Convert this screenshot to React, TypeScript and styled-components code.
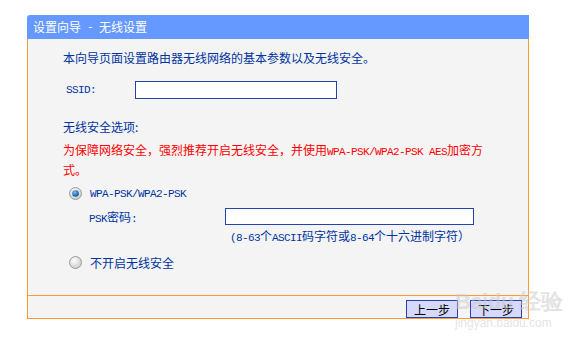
import styled, { createGlobalStyle } from "styled-components";

const GlobalStyle = createGlobalStyle`
  html, body {
    margin: 0;
    padding: 0;
    background: #ffffff;
  }
  body {
    font-family: "Noto Sans CJK SC", "DejaVu Sans", sans-serif;
    font-size: 12px;
  }
`;

const Page = styled.div`
  position: relative;
  width: 568px;
  height: 347px;
  padding: 15px 0 0 27px;
  box-sizing: border-box;
`;

const Panel = styled.div`
  width: 502px;
  display: flex;
  flex-direction: column;
`;

const TitleBar = styled.div`
  height: 24px;
  background: #6699ff;
  color: #ffffff;
  display: flex;
  align-items: center;
  padding-left: 6px;
  border-top-left-radius: 3px;
  font-size: 12px;
  line-height: 12px;
  white-space: pre;
`;

const Body = styled.div`
  background: #f4f4f4;
  border-left: 1px solid #ff9933;
  border-right: 1px solid #ff9933;
  padding: 10px 0 0 35px;
  height: 246px;
  color: #0033a0;
`;

const Line = styled.div<{ $top?: number; $indent?: number; $red?: boolean }>`
  margin-top: ${(p) => p.$top ?? 0}px;
  padding-left: ${(p) => p.$indent ?? 0}px;
  line-height: 17px;
  color: ${(p) => (p.$red ? "#ff0000" : "#0033a0")};
  white-space: nowrap;
`;

const Mono = styled.span`
  font-family: "Liberation Mono", "DejaVu Sans Mono", monospace;
  font-size: 11px;
  letter-spacing: -0.6px;
`;

const FieldRow = styled.div<{ $top: number; $indent: number; $label: number }>`
  margin-top: ${(p) => p.$top}px;
  padding-left: ${(p) => p.$indent}px;
  display: grid;
  grid-template-columns: ${(p) => p.$label}px auto;
  align-items: center;
`;

const TextBox = styled.div<{ $w: number; $h: number }>`
  width: ${(p) => p.$w}px;
  height: ${(p) => p.$h}px;
  box-sizing: border-box;
  background: #ffffff;
  border: 1px solid #2244aa;
`;

const RadioRow = styled.div<{ $top: number }>`
  margin-top: ${(p) => p.$top}px;
  padding-left: 6px;
  display: flex;
  align-items: center;
  gap: 8px;
  height: 17px;
`;

const Footer = styled.div`
  background: #f4f4f4;
  border: 1px solid #ff9933;
  height: 24px;
  display: flex;
  justify-content: flex-end;
  align-items: flex-start;
  gap: 12px;
  padding: 4px 6px 0 0;
  box-sizing: border-box;
`;

const StepButton = styled.div`
  width: 52px;
  height: 18px;
  box-sizing: border-box;
  background: #d6d9fa;
  border: 1px solid #2a3fb0;
  color: #000000;
  display: flex;
  align-items: center;
  justify-content: center;
  font-size: 12px;
`;

const Watermark = styled.div`
  position: absolute;
  left: 455px;
  top: 290px;
  color: rgba(200, 200, 200, 0.5);
  font-family: "Liberation Sans", sans-serif;
  white-space: nowrap;
  pointer-events: none;
`;

const MarkLogo = styled.div`
  font-size: 22px;
  font-weight: bold;
  line-height: 24px;
  letter-spacing: -0.5px;
`;

const MarkUrl = styled.div`
  font-size: 12px;
  line-height: 14px;
  margin-top: 2px;
`;

const Radio = ({ checked }: { checked?: boolean }) => (
  <svg width="13" height="13" viewBox="0 0 13 13">
    <defs>
      <radialGradient id={checked ? "rg1" : "rg0"} cx="40%" cy="35%" r="70%">
        <stop offset="0%" stopColor="#ffffff" />
        <stop offset="100%" stopColor="#c8c8c8" />
      </radialGradient>
      <radialGradient id="dot" cx="40%" cy="35%" r="65%">
        <stop offset="0%" stopColor="#6fc3ff" />
        <stop offset="100%" stopColor="#0a4f9c" />
      </radialGradient>
    </defs>
    <circle
      cx="6.5"
      cy="6.5"
      r="6"
      fill={`url(#${checked ? "rg1" : "rg0"})`}
      stroke="#9a9a9a"
      strokeWidth="1"
    />
    {checked && <circle cx="6.5" cy="6.5" r="3.3" fill="url(#dot)" />}
  </svg>
);

export default function App() {
  return (
    <Page>
      <GlobalStyle />
      <Panel>
        <TitleBar>
          设置向导<Mono> - </Mono>无线设置
        </TitleBar>
        <Body>
          <Line>本向导页面设置路由器无线网络的基本参数以及无线安全。</Line>
          <FieldRow $top={15} $indent={3} $label={69}>
            <Mono>SSID:</Mono>
            <TextBox $w={202} $h={18} />
          </FieldRow>
          <Line $top={19}>无线安全选项:</Line>
          <Line $top={6} $red>
            为保障网络安全，强烈推荐开启无线安全，并使用
            <Mono>WPA-PSK/WPA2-PSK AES</Mono>加密方
          </Line>
          <Line $red>式。</Line>
          <RadioRow $top={7}>
            <Radio checked />
            <Mono>WPA-PSK/WPA2-PSK</Mono>
          </RadioRow>
          <FieldRow $top={6} $indent={26} $label={136}>
            <span>
              <Mono>PSK</Mono>密码<Mono>:</Mono>
            </span>
            <TextBox $w={249} $h={17} />
          </FieldRow>
          <Line $top={2} $indent={167}>
            <Mono>(8-63</Mono>个<Mono>ASCII</Mono>码字符或<Mono>8-64</Mono>
            个十六进制字符）
          </Line>
          <RadioRow $top={7}>
            <Radio />
            <span>不开启无线安全</span>
          </RadioRow>
        </Body>
        <Footer>
          <StepButton>上一步</StepButton>
          <StepButton>下一步</StepButton>
        </Footer>
      </Panel>
      <Watermark>
        <MarkLogo>Baidu 经验</MarkLogo>
        <MarkUrl>jingyan.baidu.com</MarkUrl>
      </Watermark>
    </Page>
  );
}
